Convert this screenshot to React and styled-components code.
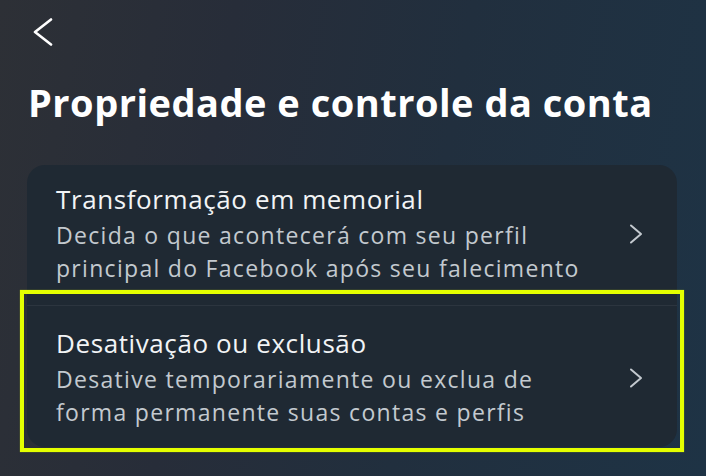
import React from "react";
import styled, { createGlobalStyle } from "styled-components";

const GlobalStyle = createGlobalStyle`
  html, body {
    margin: 0;
    padding: 0;
  }
  body {
    width: 706px;
    height: 476px;
    overflow: hidden;
    font-family: "Open Sans", "Noto Sans", sans-serif;
    background: #1f2c3a;
  }
`;

const Page = styled.div`
  width: 706px;
  height: 476px;
  box-sizing: border-box;
  padding: 18px 29px 0 27px;
  background: linear-gradient(100deg, #2d3036 0%, #272d39 30%, #212f3e 60%, #1e3345 100%);
  color: #fff;
`;

const BackButton = styled.button`
  display: block;
  margin: 0 0 0 6px;
  padding: 0;
  border: none;
  background: none;
  width: 20px;
  height: 28px;
  cursor: pointer;
`;

const Title = styled.h1`
  margin: 33px 0 0 1px;
  font-size: 38px;
  line-height: 46px;
  font-weight: 700;
  letter-spacing: 0.5px;
  color: #fff;
`;

const Card = styled.div`
  margin-top: 40px;
  width: 650px;
  border-radius: 18px;
  background: #1f2933;
`;

const Row = styled.div`
  position: relative;
  display: flex;
  align-items: center;
  padding: ${(p) => p.$pad};
  border-top: ${(p) => (p.$divider ? "1px solid rgba(255,255,255,0.06)" : "none")};
`;

const Texts = styled.div`
  flex: 1;
`;

const ItemTitle = styled.div`
  font-size: 26px;
  line-height: 34px;
  font-weight: 500;
  letter-spacing: 0.6px;
  color: #f2f4f6;
  margin-bottom: 3px;
`;

const ItemSub = styled.div`
  font-size: 23px;
  line-height: 33px;
  letter-spacing: 1.3px;
  color: #c3c9cf;
`;

const Chevron = styled.svg`
  flex: none;
  width: 14px;
  height: 20px;
  margin-left: 10px;
`;

const Highlight = styled.div`
  position: absolute;
  left: -7px;
  right: -7px;
  top: -16px;
  bottom: -5px;
  border: 4px solid #e4ff00;
  box-shadow: 0 0 1px rgba(228, 255, 0, 0.6);
  pointer-events: none;
`;

const items = [
  {
    title: "Transformação em memorial",
    sub: ["Decida o que acontecerá com seu perfil", "principal do Facebook após seu falecimento"],
    pad: "17px 34px 20px 29px",
  },
  {
    title: "Desativação ou exclusão",
    sub: ["Desative temporariamente ou exclua de", "forma permanente suas contas e perfis"],
    pad: "20px 34px 18px 29px",
    divider: true,
    highlight: true,
  },
];

export default function App() {
  return (
    <>
      <GlobalStyle />
      <Page>
        <BackButton aria-label="Voltar">
          <svg width="20" height="28" viewBox="0 0 20 28">
            <polyline
              points="18,1.5 2,14 18,26.5"
              fill="none"
              stroke="#fff"
              strokeWidth="2.6"
              strokeLinecap="round"
              strokeLinejoin="round"
            />
          </svg>
        </BackButton>
        <Title>Propriedade e controle da conta</Title>
        <Card>
          {items.map((it) => (
            <Row key={it.title} $pad={it.pad} $divider={it.divider}>
              <Texts>
                <ItemTitle>{it.title}</ItemTitle>
                {it.sub.map((line) => (
                  <ItemSub key={line}>{line}</ItemSub>
                ))}
              </Texts>
              <Chevron viewBox="0 0 14 20">
                <polyline
                  points="2,1.5 12,10 2,18.5"
                  fill="none"
                  stroke="#c3c9cf"
                  strokeWidth="2"
                  strokeLinecap="round"
                  strokeLinejoin="round"
                />
              </Chevron>
              {it.highlight && <Highlight />}
            </Row>
          ))}
        </Card>
      </Page>
    </>
  );
}
